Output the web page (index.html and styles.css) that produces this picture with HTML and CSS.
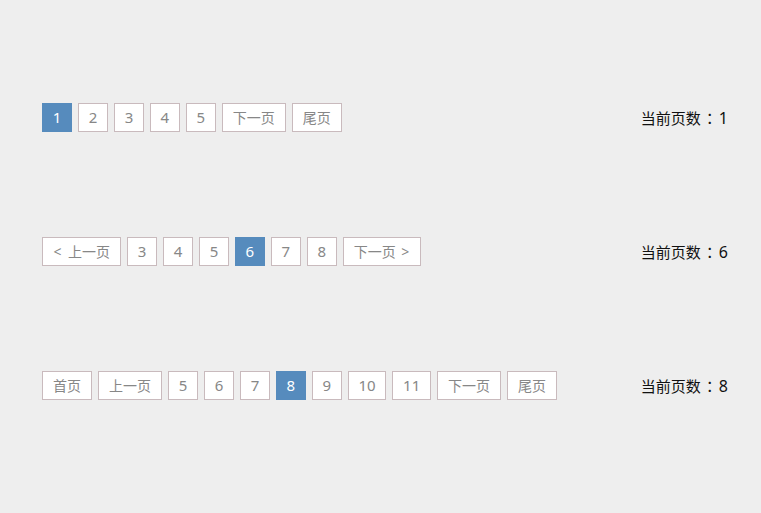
FILE: index.html
```html
<!DOCTYPE html>
<html lang="zh-CN">
<head>
<meta charset="utf-8">
<title>分页</title>
<link rel="stylesheet" href="styles.css">
</head>
<body>
<div class="page">
  <div class="row">
    <div class="pager">
      <a class="item num active">1</a>
      <a class="item num">2</a>
      <a class="item num">3</a>
      <a class="item num">4</a>
      <a class="item num">5</a>
      <a class="item">下一页</a>
      <a class="item">尾页</a>
    </div>
    <div class="current">当前页数<span class="colon">：</span><span class="digit">1</span></div>
  </div>
  <div class="row">
    <div class="pager">
      <a class="item"><span class="arr prev">&lt;</span>上一页</a>
      <a class="item num">3</a>
      <a class="item num">4</a>
      <a class="item num">5</a>
      <a class="item num active">6</a>
      <a class="item num">7</a>
      <a class="item num">8</a>
      <a class="item">下一页<span class="arr next">&gt;</span></a>
    </div>
    <div class="current">当前页数<span class="colon">：</span><span class="digit">6</span></div>
  </div>
  <div class="row">
    <div class="pager">
      <a class="item">首页</a>
      <a class="item">上一页</a>
      <a class="item num">5</a>
      <a class="item num">6</a>
      <a class="item num">7</a>
      <a class="item num active">8</a>
      <a class="item num">9</a>
      <a class="item num">10</a>
      <a class="item num">11</a>
      <a class="item">下一页</a>
      <a class="item">尾页</a>
    </div>
    <div class="current">当前页数<span class="colon">：</span><span class="digit">8</span></div>
  </div>
</div>
</body>
</html>
```

FILE: styles.css
```css
html, body {
  margin: 0;
  padding: 0;
  background: #eeeeee;
}
body {
  font-family: "Noto Sans", "Noto Sans CJK SC", sans-serif;
  width: 761px;
  height: 513px;
  overflow: hidden;
}
.page {
  padding: 103px 33px 0 42px;
  display: flex;
  flex-direction: column;
  gap: 105px;
}
.row {
  display: flex;
  justify-content: space-between;
  align-items: center;
  height: 29px;
}
.pager {
  display: flex;
  gap: 6px;
}
.item {
  display: block;
  box-sizing: border-box;
  height: 29px;
  line-height: 27px;
  padding: 0 10px;
  border: 1px solid #c9babd;
  background: #ffffff;
  color: #878787;
  font-size: 14px;
  text-align: center;
  white-space: nowrap;
}
.item.num {
  font-size: 15px;
  padding: 0 9.7px;
}
.item.active {
  background: #568bbd;
  border-color: #568bbd;
  color: #ffffff;
}
.arr {
  display: inline-block;
  font-size: 14px;
  width: 9px;
}
.arr.prev {
  margin-right: 6px;
}
.arr.next {
  margin-left: 5px;
}
.current {
  font-size: 15px;
  color: #111111;
  white-space: nowrap;
}
.colon {
  font-family: "Noto Sans CJK JP", sans-serif;
  display: inline-block;
  width: 18px;
  text-align: center;
}
.digit {
  font-size: 16px;
}
```
